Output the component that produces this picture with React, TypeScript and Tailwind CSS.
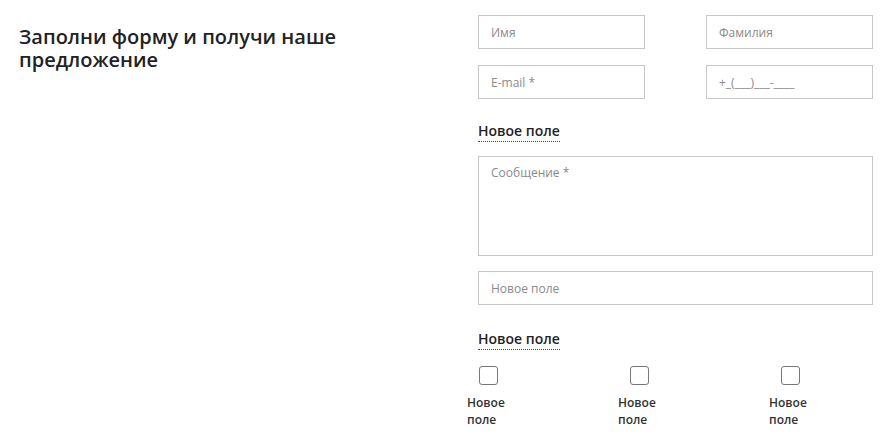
import * as React from "react";

const font = { fontFamily: '"Open Sans", "Noto Sans", sans-serif' };

function Field({placeholder}: {placeholder: string}) {
  return (
    <input
      type="text"
      placeholder={placeholder}
      className="w-full h-[34px] px-3 border border-[#c7c7c7] bg-white text-[12px] text-[#333] placeholder:text-[#8a8a8a] outline-none"
    />
  );
}

function FieldLabel({text}: {text: string}) {
  return (
    <div className="flex">
      <span className="text-[14px] font-semibold text-[#222] leading-[18px] pb-[1px] border-b border-dotted border-[#555]">
        {text}
      </span>
    </div>
  );
}

function Check({label}: {label: string}) {
  return (
    <div className="flex flex-col items-center w-[42px]">
      <span className="w-[19px] h-[19px] rounded-[3px] border border-[#777] bg-white" />
      <span className="mt-[9px] text-[12px] font-semibold text-[#333] leading-[17px] w-[42px]">
        {label}
      </span>
    </div>
  );
}

export default function App() {
  return (
    <main className="w-[881px] h-[442px] bg-white flex overflow-hidden" style={font}>
      <div className="w-[478px] pl-[19px] pt-[25px]">
        <h2 className="text-[20px] font-semibold text-[#222] leading-[23px] w-[340px]">
          Заполни форму и получи наше предложение
        </h2>
      </div>
      <form className="w-[395px] pt-[15px] flex flex-col">
        <div className="grid grid-cols-2 gap-x-[61px] gap-y-[16px]">
          <Field placeholder="Имя" />
          <Field placeholder="Фамилия" />
          <Field placeholder="E-mail *" />
          <Field placeholder="+_(___)___-____" />
        </div>
        <div className="mt-[23px]">
          <FieldLabel text="Новое поле" />
        </div>
        <textarea
          placeholder="Сообщение *"
          className="mt-[14px] w-full h-[100px] px-3 py-[7px] border border-[#c7c7c7] text-[12px] placeholder:text-[#8a8a8a] resize-none outline-none"
        />
        <div className="mt-[15px]">
          <Field placeholder="Новое поле" />
        </div>
        <div className="mt-[25px]">
          <FieldLabel text="Новое поле" />
        </div>
        <div className="mt-[16px] -ml-[11px] flex gap-[109px]">
          <Check label="Новое поле" />
          <Check label="Новое поле" />
          <Check label="Новое поле" />
        </div>
      </form>
    </main>
  );
}
